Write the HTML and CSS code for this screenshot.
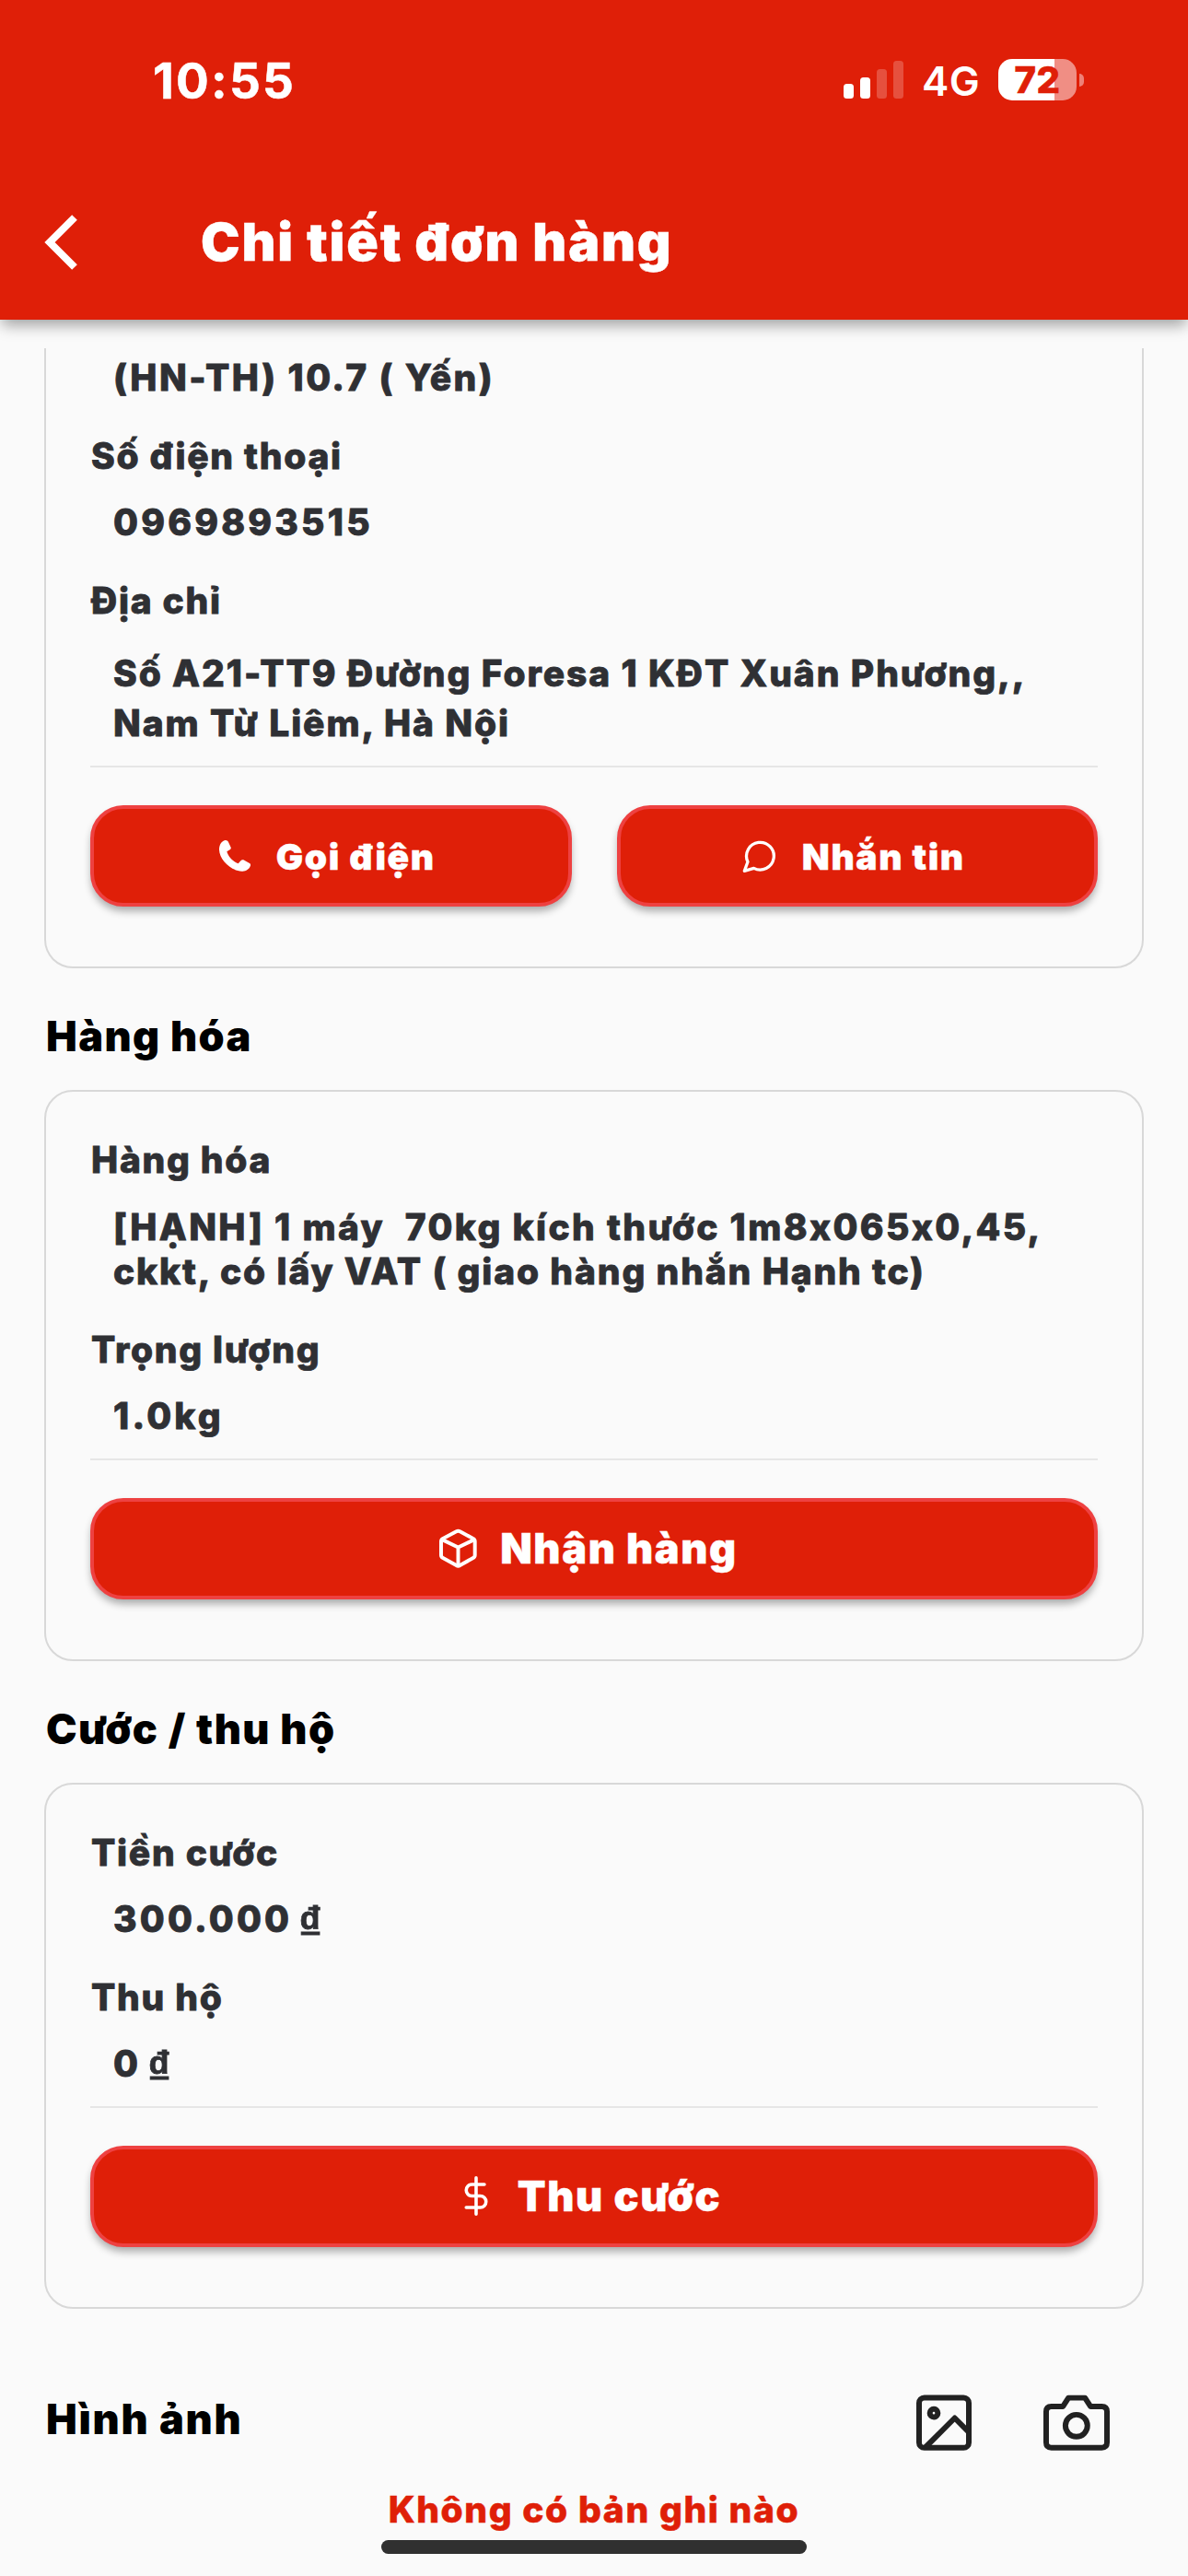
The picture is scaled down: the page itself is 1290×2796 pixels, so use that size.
FILE: index.html
```html
<!DOCTYPE html>
<html lang="vi">
<head>
    <meta charset="UTF-8">
    <meta name="viewport" content="width=device-width, initial-scale=1.0">
    <title>Chi tiết đơn hàng</title>
    <link rel="stylesheet" href="styles.css">
</head>
<body>
    <header class="app-header">
        <div class="status-bar">
            <span class="time">10:55</span>
            <div class="status-icons">
                <svg class="signal" width="65" height="41" viewBox="0 0 65 41" fill="#fff">
                    <rect x="0" y="25" width="11" height="16" rx="3.5"/>
                    <rect x="18" y="18" width="11" height="23" rx="3.5"/>
                    <rect x="36" y="9" width="11" height="32" rx="3.5" opacity=".22"/>
                    <rect x="54" y="0" width="11" height="41" rx="3.5" opacity=".22"/>
                </svg>
                <span class="network">4G</span>
                <div class="battery">72</div>
                <span class="battery-tip"></span>
            </div>
        </div>
        <div class="toolbar">
            <svg class="back" width="38" height="60" viewBox="0 0 38 60" fill="none" stroke="#fff" stroke-width="8">
                <path d="M34 3 7 30 34 57"/>
            </svg>
            <h1>Chi tiết đơn hàng</h1>
        </div>
    </header>

    <main>
        <!-- Receiver card, scrolled under the header -->
        <section class="card card-scrolled">
            <div class="field">
                <div class="value code">(HN-TH) 10.7 ( Yến)</div>
            </div>
            <div class="field">
                <div class="label">Số điện thoại</div>
                <div class="value number">0969893515</div>
            </div>
            <div class="field">
                <div class="label">Địa chỉ</div>
                <div class="value address">Số A21-TT9 Đường Foresa 1 KĐT Xuân Phương,,<br>Nam Từ Liêm, Hà Nội</div>
            </div>
            <div class="actions">
                <button class="btn btn-small">
                    <svg width="34" height="34" viewBox="0 0 102 102" fill="#fff">
                        <path d="M0 28C1 13 8 4 17 1c6-2 10 0 13 5l8 17c1 3 0 5-2 7l-11 7c5 18 20 32 37 39l9-10c2-3 5-3 8-2l20 11c4 2 4 6 2 10-4 10-14 17-27 16C36 99-1 61 0 28Z"/>
                    </svg>
                    Gọi điện
                </button>
                <button class="btn btn-small">
                    <svg width="37" height="37" viewBox="0 0 112 112" fill="none" stroke="#fff" stroke-width="10" stroke-linejoin="round">
                        <path d="M7 104 18 74A45 45 0 1 1 38 95Z"/>
                    </svg>
                    Nhắn tin
                </button>
            </div>
        </section>

        <h2>Hàng hóa</h2>
        <section class="card">
            <div class="field">
                <div class="label">Hàng hóa</div>
                <div class="value">[HẠNH] 1 máy&nbsp; 70kg kích thước 1m8x065x0,45,<br><span class="note">ckkt, có lấy VAT ( giao hàng nhắn Hạnh tc)</span></div>
            </div>
            <div class="field">
                <div class="label">Trọng lượng</div>
                <div class="value number">1.0kg</div>
            </div>
            <div class="actions">
                <button class="btn">
                    <svg width="41" height="43" viewBox="0 0 124 128" fill="none" stroke="#fff" stroke-width="12" stroke-linejoin="round">
                        <path d="M56 9q6-4 12 0l43 23q6 3 6 9v46q0 6-6 9l-43 24q-6 4-12 0L12 96q-6-3-6-9V41q0-6 6-9Z"/>
                        <path d="M8 35l54 26 54-26M62 61v62"/>
                    </svg>
                    Nhận hàng
                </button>
            </div>
        </section>

        <h2>Cước / thu hộ</h2>
        <section class="card">
            <div class="field">
                <div class="label">Tiền cước</div>
                <div class="value number">300.000 <span class="dong">₫</span></div>
            </div>
            <div class="field">
                <div class="label">Thu hộ</div>
                <div class="value number">0 <span class="dong">₫</span></div>
            </div>
            <div class="actions">
                <button class="btn">
                    <svg class="dollar" width="26" height="43" viewBox="5 0 14 24" fill="none" stroke="#fff" stroke-width="2" stroke-linecap="round">
                        <path d="M12 1v22M17 5H9.5a3.5 3.5 0 0 0 0 7h5a3.5 3.5 0 0 1 0 7H6"/>
                    </svg>
                    Thu cước
                </button>
            </div>
        </section>

        <div class="photos">
            <h2>Hình ảnh</h2>
            <div class="photo-tools">
                <svg width="60" height="61" viewBox="0 0 180 182" fill="none" stroke="#212121" stroke-width="18">
                    <rect x="9" y="10" width="162" height="163" rx="17"/>
                    <circle cx="57" cy="60" r="13"/>
                    <path d="M30 171 125 76l46 46" stroke-linejoin="round"/>
                </svg>
                <svg width="72" height="61" viewBox="0 0 217 182" fill="none" stroke="#212121" stroke-width="18" stroke-linejoin="round">
                    <path d="M26 38h38l18-28h54l18 28h37q17 0 17 17v101q0 17-17 17H26q-17 0-17-17V55q0-17 17-17Z"/>
                    <circle cx="108" cy="101" r="36"/>
                </svg>
            </div>
        </div>
        <p class="empty">Không có bản ghi nào</p>
    </main>

    <div class="home-indicator"></div>
</body>
</html>
```
FILE: styles.css
```css
* {
    box-sizing: border-box;
}

body {
    margin: 0;
    height: 2796px;
    overflow: hidden;
    position: relative;
    background: #fafafa;
    color: #2f3034;
    font-family: Inter, "Noto Sans", sans-serif;
}

h1,
h2,
p {
    margin: 0;
}

svg {
    display: block;
    flex-shrink: 0;
}

/* Header */
.app-header {
    height: 347px;
    background: #df1f08;
    color: #fff;
    box-shadow: 0 8px 15px -2px rgba(0, 0, 0, 0.36);
}

.status-bar {
    height: 179px;
    padding: 0 113px 0 166px;
    display: flex;
    align-items: center;
    justify-content: space-between;
}

.time {
    padding-bottom: 3px;
    font-size: 53px;
    font-weight: 700;
    letter-spacing: 2.2px;
    -webkit-text-stroke: 0.5px;
}

.status-icons {
    display: flex;
    align-items: center;
    padding-bottom: 6px;
}

.network {
    margin: 3px 20px 0;
    font-size: 44px;
    font-weight: 600;
    letter-spacing: 0.4px;
}

.battery {
    width: 85px;
    height: 45px;
    border-radius: 15px;
    background: linear-gradient(90deg, #fff 61px, #f08e84 61px);
    color: #df1f08;
    font-size: 40px;
    font-weight: 800;
    letter-spacing: 0.5px;
    line-height: 45px;
    text-align: center;
    -webkit-text-stroke: 0.6px;
}

.battery-tip {
    width: 5px;
    height: 14px;
    margin-left: 3px;
    border-radius: 0 5px 5px 0;
    background: #ee8177;
}

.toolbar {
    height: 168px;
    padding-left: 47px;
    display: flex;
    align-items: center;
}

h1 {
    margin-left: 133px;
    font-size: 57px;
    font-weight: 900;
    line-height: 60px;
    letter-spacing: 1.8px;
    -webkit-text-stroke: 0.4px;
}

/* Content */
main {
    padding: 31px 48px 0;
}

.card {
    padding: 50px 48px 65px;
    border: 2px solid #d8d8d8;
    border-radius: 31px;
}

.card-scrolled {
    padding-top: 8px;
    border-top: 0;
    border-top-left-radius: 0;
    border-top-right-radius: 0;
}

.field {
    margin-bottom: 36px;
    font-size: 39px;
    font-weight: 800;
    line-height: 48.5px;
    -webkit-text-stroke: 0.8px;
}

.label {
    margin-bottom: 24px;
    padding-left: 1px;
    letter-spacing: 1.7px;
}

.value {
    padding-left: 25px;
    letter-spacing: 2.35px;
    white-space: nowrap;
}

.code {
    letter-spacing: 2.4px;
}

.number {
    letter-spacing: 3.2px;
}

.note {
    letter-spacing: 1.85px;
}

.address {
    margin-top: 28px;
    margin-bottom: -17px;
    line-height: 54px;
    letter-spacing: 1.9px;
}

.dong {
    margin-left: -5px;
    font-family: "Liberation Sans", sans-serif;
    font-size: 50px;
    font-weight: 700;
    line-height: 1px;
    vertical-align: -7px;
}

.actions {
    display: flex;
    gap: 49px;
    margin-top: -15px;
    padding-top: 41px;
    border-top: 2px solid #e6e6e6;
}

.btn {
    flex: 1;
    height: 110px;
    padding: 0 12px 0 0;
    display: flex;
    align-items: center;
    justify-content: center;
    gap: 25px;
    border: 4px solid #ee4141;
    border-radius: 36px;
    background: #df1f08;
    box-shadow: 0 6px 9px -1px rgba(0, 0, 0, 0.32);
    color: #fff;
    font-family: inherit;
    font-size: 45px;
    font-weight: 900;
    letter-spacing: 1.6px;
    -webkit-text-stroke: 0.4px;
}

.btn-small {
    padding-right: 8px;
    gap: 28px;
    font-size: 39px;
}

.dollar {
    margin-left: 9px;
    margin-right: 7px;
}

h2 {
    margin: 47px 0 31px 2px;
    color: #000;
    font-size: 45px;
    font-weight: 900;
    line-height: 54px;
    letter-spacing: 1.4px;
}

.photos {
    display: flex;
    justify-content: space-between;
    align-items: flex-start;
    margin-top: 93px;
}

.photos h2 {
    margin: 0 0 0 2px;
    letter-spacing: 1.7px;
}

.photo-tools {
    display: flex;
    gap: 78px;
    padding-right: 37px;
}

.empty {
    margin-top: 40px;
    color: #df1f08;
    font-size: 39px;
    font-weight: 800;
    line-height: 48px;
    letter-spacing: 1.6px;
    text-align: center;
    -webkit-text-stroke: 0.6px;
}

.home-indicator {
    position: absolute;
    left: 414px;
    bottom: 24px;
    width: 462px;
    height: 15px;
    border-radius: 8px;
    background: #303030;
}
```
